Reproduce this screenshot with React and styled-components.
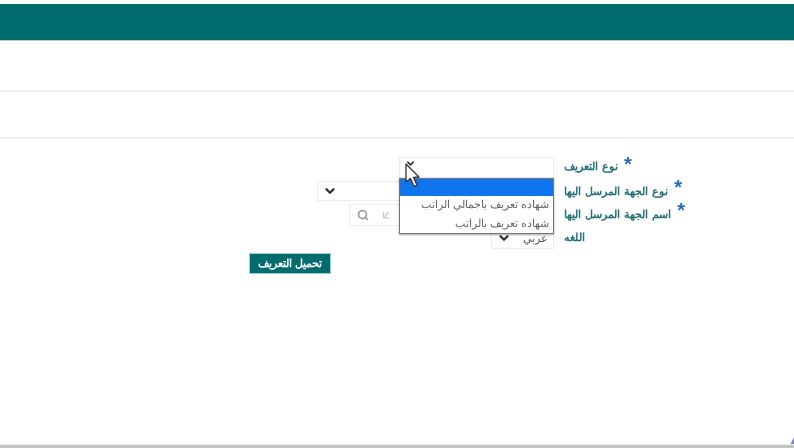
import React from "react";
import styled, { createGlobalStyle } from "styled-components";
import { ChevronDown, Search, ArrowDownLeft } from "lucide-react";

const Global = createGlobalStyle`
  html, body { margin: 0; padding: 0; background: #fff; }
  body { font-family: "Liberation Sans", "Noto Sans", sans-serif; width: 794px; height: 448px; overflow: hidden; }
`;
const Page = styled.div`
  position: relative; width: 794px; height: 448px; display: flex; flex-direction: column; background: #fff;
`;
const TopBar = styled.div`
  height: 36px; margin-top: 4px; background: #006c6e; border-bottom: 1px solid #a9d3d3; flex: none;
`;
const Band = styled.div`
  height: ${p => p.$h}px; flex: none; border-bottom: 2px solid #efefef;
`;
const Form = styled.div`
  flex: 1; padding: 18px 0 0 249px; display: flex; flex-direction: column; filter: blur(0.6px);
`;
const Row = styled.div`
  display: flex; align-items: center; height: 21px; margin-bottom: 2.5px;
`;
const FieldCell = styled.div`
  width: 305px; display: flex; justify-content: flex-end; flex: none;
`;
const Field = styled.div`
  position: relative; box-sizing: border-box; width: ${p => p.$w}px; height: ${p => p.$h || 21}px;
  border: 1px solid #ececec; background: #fff; display: flex; align-items: center; gap: ${p => p.$gap ?? 7}px;
  padding: 0 ${p => p.$pad ?? 5}px; color: #222;
`;
const FieldText = styled.span`
  margin-left: auto; font-size: 10.5px; color: #555; direction: rtl;
`;
const Label = styled.label`
  margin-left: 10px; display: flex; align-items: flex-start; gap: 6px; direction: ltr;
`;
const LabelText = styled.span`
  font-size: 11px; word-spacing: 1px; font-weight: 700; color: #23707a; direction: rtl; line-height: 21px; margin-top: ${p => p.$dy || 0}px;
`;
const Star = styled.span`
  color: #2469c4; font-size: 20px; line-height: 20px; font-weight: 700; margin-top: ${p => p.$dy || 0}px;
`;
const Menu = styled.div`
  position: absolute; top: 20px; left: -1px; right: -1px; height: 56px; box-sizing: border-box; z-index: 2;
  background: #fff; border: 1px solid #777; box-shadow: 0 1px 2px rgba(0,0,0,.35);
  display: flex; flex-direction: column;
`;
const MenuBlank = styled.div`
  height: 17px; background: #0f75ee; flex: none;
`;
const MenuItem = styled.div`
  height: 18.5px; font-size: 10.7px; line-height: 17px; color: #666; direction: rtl; padding-right: 4px; flex: none;
`;
const Cursor = styled.svg`
  position: absolute; left: 404px; top: 163px; z-index: 3; filter: blur(0.4px);
`;
const Button = styled.button`
  align-self: flex-start; margin-top: 1.5px; width: 82px; height: 21px; background: #006c6e; color: #fff;
  border: 1px solid #9fcfcf; padding: 0; font: 700 10.5px "Liberation Sans", sans-serif; direction: rtl;
`;
const Bottom = styled.div`
  position: absolute; left: 0; right: 0; bottom: 0; height: 3px; background: #c4c4c4; border-top: 1px solid #eee;
`;
const Corner = styled.svg`
  position: absolute; right: 0; bottom: 3px;
`;

export default function App() {
  return (
    <Page>
      <Global />
      <TopBar />
      <Band $h={49} />
      <Band $h={45} />
      <Form>
        <Row>
          <FieldCell>
            <Field $w={155}>
              <ChevronDown size={11} strokeWidth={3.5} color="#333" style={{ marginTop: -8 }} />
              <Menu>
                <MenuBlank />
                <MenuItem>شهاده تعريف باجمالي الراتب</MenuItem>
                <MenuItem>شهاده تعريف بالراتب</MenuItem>
              </Menu>
            </Field>
          </FieldCell>
          <Label>
            <LabelText $dy={-2}>نوع التعريف</LabelText>
            <Star $dy={-4}>*</Star>
          </Label>
        </Row>
        <Row>
          <FieldCell>
            <Field $w={237} $h={20}>
              <ChevronDown size={14} strokeWidth={4} color="#333" />
            </Field>
          </FieldCell>
          <Label>
            <LabelText>نوع الجهة المرسل اليها</LabelText>
            <Star $dy={-4}>*</Star>
          </Label>
        </Row>
        <Row>
          <FieldCell>
            <Field $w={205} $h={22} $pad={7} $gap={11}>
              <Search size={12} strokeWidth={3.5} color="#a0a0a0" />
              <ArrowDownLeft size={12} strokeWidth={2.5} color="#c8c8c8" />
            </Field>
          </FieldCell>
          <Label>
            <LabelText>اسم الجهة المرسل اليها</LabelText>
            <Star $dy={-4}>*</Star>
          </Label>
        </Row>
        <Row>
          <FieldCell>
            <Field $w={63} $h={21}>
              <ChevronDown size={14} strokeWidth={4} color="#333" />
              <FieldText>عربي</FieldText>
            </Field>
          </FieldCell>
          <Label>
            <LabelText $dy={-2}>اللغه</LabelText>
          </Label>
        </Row>
        <Button>تحميل التعريف</Button>
      </Form>
      <Cursor width="18" height="26" viewBox="0 0 18 26">
        <path d="M2 1 L2 19 L6.5 15.5 L10 23.5 L13 22 L9.5 14.5 L15 14 Z" fill="#fff" stroke="#333" strokeWidth="1.3" strokeLinejoin="round" />
      </Cursor>
      <Corner width="4" height="8" viewBox="0 0 4 8">
        <path d="M4 0 L4 8 L0 8 Z" fill="#7f86c4" />
      </Corner>
      <Bottom />
    </Page>
  );
}
